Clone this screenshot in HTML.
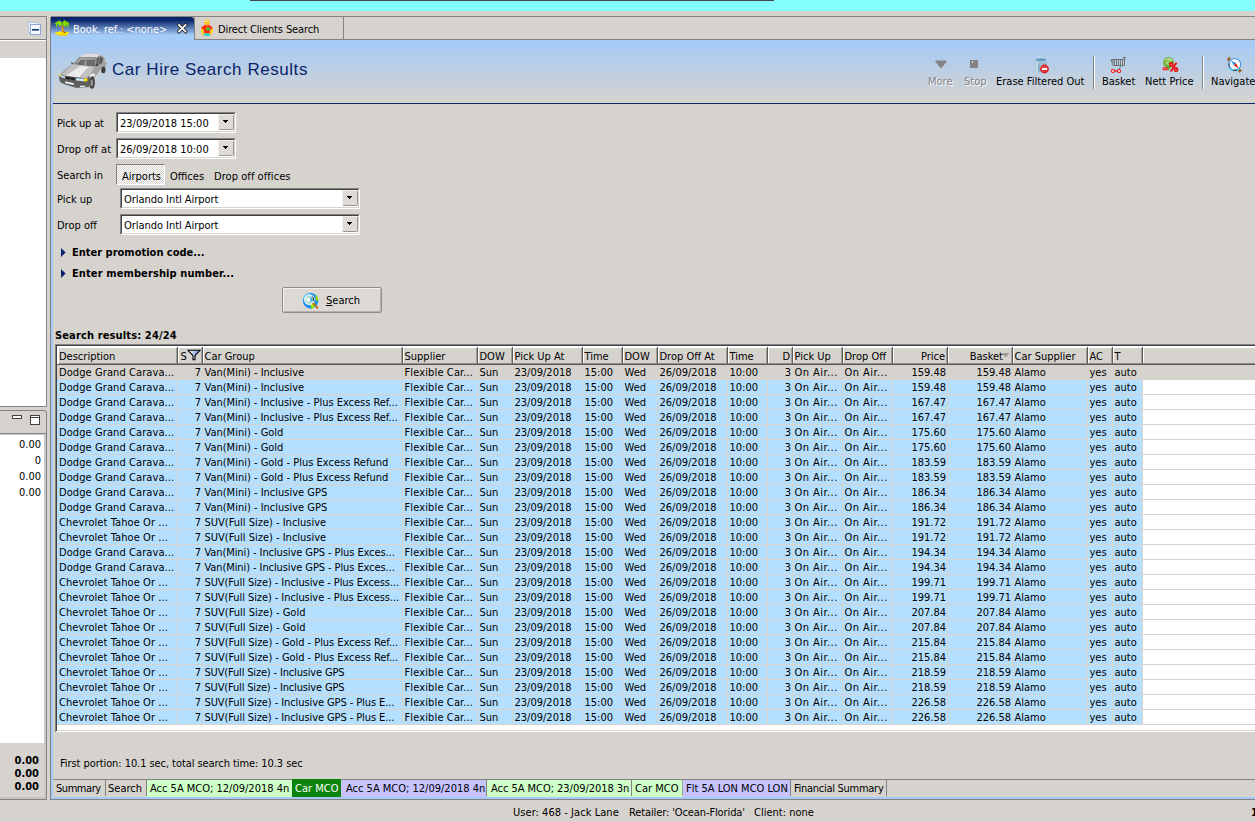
<!DOCTYPE html>
<html><head><meta charset="utf-8"><title>Car Hire Search Results</title>
<style>
html,body{margin:0;padding:0}
body{width:1255px;height:822px;overflow:hidden;position:relative;background:#d6d3ce;font-family:"DejaVu Sans Condensed", "Liberation Sans", sans-serif;font-size:11px;line-height:13px;color:#000}
div,span,svg{position:absolute;display:block}
span{white-space:pre}
span u{text-decoration:underline}
.b{font-weight:bold}
.ttl{font-family:"Liberation Sans",sans-serif;font-size:17px;line-height:20px;letter-spacing:0.55px;color:#08246b}
.sunk{box-sizing:border-box;border:1px solid;border-color:#848284 #fff #fff #848284;background:#fff}
.sunk i{position:absolute;display:block;left:0;top:0;right:0;bottom:0;border:1px solid;border-color:#424142 #d6d3ce #d6d3ce #424142}
.ddb{box-sizing:border-box;background:#dedad6;border:1px solid;border-color:#efedea #9a9792 #9a9792 #efedea;border-radius:2px}
.ddb b{position:absolute;display:block;left:4px;top:5px;width:5px;height:1px;background:#000}
.ddb b::before{content:'';position:absolute;left:1px;top:1px;width:3px;height:1px;background:#000}
.ddb b::after{content:'';position:absolute;left:2px;top:2px;width:1px;height:1px;background:#000}
.tog{box-sizing:border-box;border:1px solid;border-color:#848284 #fff #fff #848284;background:#eae9e6 repeating-conic-gradient(#ffffff 0 25%,#d6d3ce 0 50%) 0 0/2px 2px}
.btn{box-sizing:border-box;border:1px solid #8e8c88;border-radius:2px;background:#dcd9d4;box-shadow:inset 1px 1px 0 #f2f0ec,inset -1px -1px 0 #b6b3ae}
</style></head>
<body>
<div style="left:0px;top:0px;width:1255px;height:11px;background:#84ffff;"></div>
<div style="left:250px;top:0px;width:524px;height:1px;background:#4a4a4a;"></div>
<div style="left:0px;top:16px;width:47px;height:1px;background:#848284;"></div>
<div style="left:46px;top:16px;width:1px;height:391px;background:#848284;"></div>
<div style="left:0px;top:39px;width:46px;height:1px;background:#848284;"></div>
<div style="left:0px;top:40px;width:46px;height:1px;background:#ffffff;"></div>
<div style="left:0px;top:58px;width:46px;height:348px;background:#ffffff;"></div>
<div style="left:0px;top:406px;width:47px;height:1px;background:#848284;"></div>
<svg style="left:28px;top:22px" width="14" height="14" viewBox="0 0 14 14"><rect x="0.5" y="0.5" width="10" height="10" fill="#e8f0fb" stroke="#b4c8e6"/><rect x="2.5" y="2.5" width="10" height="10" fill="#f4f8fe" stroke="#8ea8d0"/><rect x="4" y="7" width="7" height="1.6" fill="#0a3c78"/></svg>
<div style="left:-4px;top:410px;width:51px;height:390px;border:1px solid #848284;border-radius:0 3px 0 0;box-sizing:border-box;background:#d6d3ce"></div>
<div style="left:0px;top:433px;width:46px;height:1px;background:#848284;"></div>
<div style="left:0px;top:434px;width:46px;height:364px;background:#c8c8c8;"></div>
<div style="left:0px;top:435px;width:44px;height:308px;background:#ffffff;"></div>
<div style="left:0px;top:743px;width:44px;height:54px;background:#d6d3ce;"></div>
<div style="left:0px;top:797px;width:46px;height:2px;background:#c4c2be;"></div>
<div style="left:12px;top:415px;width:10px;height:4px;box-sizing:border-box;border:1px solid #424142;background:#fff"></div>
<div style="left:30px;top:415px;width:10px;height:10px;box-sizing:border-box;border:1px solid #424142;background:#fff"></div>
<div style="left:30px;top:417px;width:10px;height:1px;background:#424142;"></div>
<span style="right:1214px;top:438px;">0.00</span>
<span style="right:1214px;top:454px;">0</span>
<span style="right:1214px;top:470px;">0.00</span>
<span style="right:1214px;top:486px;">0.00</span>
<span class="b" style="right:1216px;top:754px;">0.00</span>
<span class="b" style="right:1216px;top:767px;">0.00</span>
<span class="b" style="right:1216px;top:780px;">0.00</span>
<div style="left:51px;top:16px;width:1204px;height:1px;background:#848284;"></div>
<div style="left:50px;top:17px;width:1px;height:783px;background:#848284;"></div>
<div style="left:194px;top:39px;width:1061px;height:1px;background:#848284;"></div>
<div style="left:51px;top:17px;width:143px;height:23px;background:linear-gradient(#08246b 0px,#08246b 3px,#a5cbf7 18px,#a5cbf7 23px);border-radius:0 3px 0 0"></div>
<div style="left:343px;top:17px;width:1px;height:22px;background:#848284;"></div>
<div style="left:194px;top:17px;width:1px;height:22px;background:#848284;"></div>
<div style="left:51px;top:40px;width:1204px;height:63px;background:linear-gradient(#a5cbf7 0px,#a5cbf7 2px,#d6d3ce 62px,#d6d3ce 63px)"></div>
<div style="left:53px;top:103px;width:1202px;height:1px;background:#08246b;"></div>
<div style="left:51px;top:40px;width:2px;height:759px;background:#a5cbf7;"></div>
<div style="left:51px;top:797px;width:1204px;height:2px;background:#a5cbf7;"></div>
<div style="left:0px;top:799px;width:1255px;height:1px;background:#848284;"></div>
<div style="left:47px;top:799px;width:3px;height:1px;background:#d6d3ce;"></div>
<svg style="left:53px;top:19px" width="18" height="18" viewBox="0 0 18 18">
<path d="M2 13.6 L4 13 L7 12.6 L13 12.8 L16 13.6 L16 14.6 L14 15.2 L13.6 16.4 L5.6 16.4 L5 15.4 L2.6 15 Z" fill="#ffe400"/>
<path d="M5 15.4 L13.8 15.4 L13.6 16.6 L5.6 16.6 Z" fill="#f0c000"/>
<path d="M8.6 4.5 Q8.2 8 9.2 13.6 L11 13.6 Q10.2 8 10 5 Z" fill="#f8a800"/>
<path d="M9 7.2h1.2v1h-1.2zM9.3 9.6h1.2v1h-1.2zM9.5 12h1.3v1h-1.3z" fill="#b85000"/>
<path d="M10.8 12.8h2.2v0.9h-2.2z" fill="#604000"/>
<path d="M9.2 4.6 C7 1 3.5 1.6 1 5.6 C1.6 5.4 2.6 4.6 3.4 4.6 C3 5.8 2.6 7 3.6 8.6 C4 6.8 4.6 5.6 6 5 C5.6 6.2 5.8 7.4 6.6 8.6 C6.8 6.8 7.6 5.8 9.2 5.4 Z" fill="#84dc00"/>
<path d="M9.4 4.6 C11 1.2 15 1.4 17 6.2 C16.4 5.8 15.6 5.2 15 5.2 C15.6 6.6 15.6 8 14.8 9.6 C14.6 7.6 14 6.4 12.8 5.8 C13 7 12.6 8 12 9 C11.8 7.2 11 6.2 9.4 5.4 Z" fill="#84dc00"/>
<path d="M9.2 5 C8 2.4 6 1 4.6 1 C6 1.6 7 3 7.6 4.6 Z M9.4 5 C9.6 2.6 11 1 12.8 0.9 C11.6 2 11 3.4 10.8 4.8 Z" fill="#a0f000"/>
<path d="M8 4 L10.6 4 L10.2 6 L8.6 6 Z" fill="#5cb400"/>
</svg>
<span style="left:73px;top:23px;color:#fff;letter-spacing:0px">Book. ref.: &lt;none&gt;</span>
<svg style="left:177px;top:23px" width="10.5" height="10.5" viewBox="0 0 11 11"><path d="M2 2 L9 9 M9 2 L2 9" stroke="#222" stroke-width="3.6" stroke-linecap="square"/><path d="M2 2 L9 9 M9 2 L2 9" stroke="#fff" stroke-width="1.8" stroke-linecap="square"/></svg>
<svg style="left:199px;top:19px" width="18" height="18" viewBox="0 0 18 18">
<ellipse cx="8" cy="3.2" rx="2.7" ry="2.4" fill="#ffc818"/><ellipse cx="7.8" cy="2.6" rx="1.4" ry="0.9" fill="#fff4b0"/><ellipse cx="8" cy="3.6" rx="0.9" ry="0.5" fill="#ff8a00"/>
<path d="M5.6 6 L7 5.4 L8 6.4 L9 5.4 L10.4 6 L13.6 8.4 L12.2 11.4 L11 10.6 L11 14.6 L5 14.6 L5 10.6 L3.8 11.4 L2.2 8.6 Z" fill="#ff3008"/>
<path d="M7.4 5.6 L8.6 5.6 L8.4 7.2 L7.6 7.2 Z" fill="#ffb800"/>
<path d="M2.2 9.6 Q1.4 11 2.4 13 L4.4 16.6 L5.6 16 L4.6 12.4 L4.2 10.6 Z" fill="#ffd000"/>
<path d="M13.6 9.6 Q14.6 11 13.6 13 L11.6 16.6 L10.4 16 L11.4 12.4 L11.8 10.6 Z" fill="#ffd000"/>
<path d="M4.4 16.6 L5.6 16 L5 14 Z M11.6 16.6 L10.4 16 L11 14 Z" fill="#ff8000"/>
<rect x="7.4" y="8.6" width="3.4" height="2.6" fill="#20d848"/>
<rect x="5.2" y="14.4" width="5.8" height="2.4" fill="#18e0e0"/><rect x="7.8" y="14.8" width="0.8" height="1.8" fill="#20b070"/>
</svg>
<span style="left:218px;top:23px;letter-spacing:-0.119px;">Direct Clients Search</span>
<svg style="left:54px;top:48px" width="60" height="48" viewBox="0 0 60 48">
<path d="M5.1 29.2 L6.1 26 L12.3 20.4 L17.5 16.9 L19.3 15.8 L25.7 8.8 L28 7.3 L32.7 5.8 L40.9 5.8 L46.7 7 L50.2 9.9 L52 12.8 L52.5 15.8 L51.4 17.5 L51.1 24.5 L47.3 24.5 L46.7 22.2 L40.9 30.4 L40.3 35 L38.5 40.3 L36.2 40.9 L35 39.1 L22.2 39.7 L10.5 36.2 L6.1 33.9 Z" fill="#a2a2a2"/>
<path d="M25.7 8.8 L28 7.3 L32.7 5.8 L40.9 5.8 L46.7 7 L43 9.6 L26 9.6 Z" fill="#dedede"/>
<path d="M19.5 16.3 L25.7 9.3 L42 9.3 L40.9 18.7 Z" fill="#6c6c6c"/>
<path d="M21 15.2 L26 9.8 L41.5 9.8 L41.3 11.5 L27 11.8 L23 15.6 Z" fill="#a8a8a8"/>
<path d="M30.6 12 L32.6 12 L32.3 17.6 L30.2 17.4 Z" fill="#9a9a9a"/>
<path d="M6.5 26 L19.3 16.3 L40.9 18.7 L35 27.7 L32.7 30.4 L11.7 28 Z" fill="#c2c2c2"/>
<path d="M26.3 18.1 L32.7 18.7 L23.4 29.2 L12.3 27.6 Z" fill="#ececec"/>
<path d="M32.7 18.7 L34 18.8 L24.6 29.4 L23.4 29.2 Z" fill="#ffffff"/>
<path d="M12.3 20.6 L17.5 17.2 L9 26.6 L6.8 26 Z" fill="#b0b0b0"/>
<path d="M5.1 29.2 L6.3 26.4 L11.7 28 L32.7 30.4 L35 28 L35.6 33 L35 39.1 L22.2 39.7 L10.5 36.2 L6.1 33.9 Z" fill="#5e5e5e"/>
<path d="M11.8 28.6 L16 29.2 L16 31.6 L12 30.8 Z M16.6 29.4 L20.8 30 L20.6 32.4 L16.6 31.6 Z" fill="#1e1e1e"/>
<path d="M22 30.2 L30 30.7 L30 33.3 L22.2 32.6 Z" fill="#cdeeff"/>
<path d="M30.1 30.5 L33.4 30.2 L33.4 33.2 L30.1 33.5 Z" fill="#ffe000"/>
<path d="M6.4 27 L11 28.5 L11 30.2 L6.4 29 Z" fill="#bfe4ff"/><rect x="5.6" y="26" width="1.4" height="1.6" fill="#ffe000"/>
<path d="M11.1 33.3 L19.8 35.2 L19.8 37 L11.1 35.2 Z" fill="#f0f0f0"/>
<path d="M26 37.7 L31 37.8 L31 39 L26 39 Z" fill="#f4f4f4"/>
<path d="M40.9 18.7 L42 9.5 L46.7 7 L50.2 9.9 L52 12.8 L52.5 15.8 L51.4 17.5 L51.1 24.5 L47.3 24.5 L46.7 22.2 L40.9 30.4 L40.5 27 Z" fill="#a0a0a0"/>
<path d="M42.8 10.2 L46.5 8.3 L49.2 10.8 L47.6 15.6 L42.2 17.6 Z" fill="#565656"/>
<path d="M45.4 9 L46.2 8.6 L45 16.6 L44 17 Z" fill="#a0a0a0"/>
<path d="M35.6 27.6 Q38 24.2 41 26.2 L41 28.8 Q38.4 26.6 36.2 29.6 Z" fill="#efefef"/>
<ellipse cx="38.1" cy="34.6" rx="2.7" ry="6.2" fill="#3a3a3a"/><ellipse cx="37.8" cy="34.8" rx="1.3" ry="3.6" fill="#9a9a9a"/>
<ellipse cx="49.4" cy="22" rx="2" ry="3.3" fill="#3a3a3a"/>
<path d="M41.2 30 L47 21.8" stroke="#e6e6e6" stroke-width="0.9"/>
<path d="M16.8 14 L18.6 14.4 L19.4 16.2 L17.6 15.8 Z" fill="#444"/>
<path d="M41.6 16.4 L44.2 16.2 L44 18 L41.6 18 Z" fill="#3c3c3c"/>
<path d="M50.6 12.6 L52.8 12.4 L52.8 13.6 L50.8 13.8 Z" fill="#e8e8e8"/>
</svg>
<span class="ttl" style="left:112px;top:60px">Car Hire Search Results</span>
<svg style="left:935px;top:60px" width="12" height="9" viewBox="0 0 12 9"><path d="M0.5 0.5 L11.5 0.5 L11.5 2 L6 8.5 L0.5 2 Z" fill="#848284"/></svg>
<span style="left:929px;top:76px;color:#fff">More</span>
<span style="left:928px;top:75px;color:#848284">More</span>
<div style="left:970px;top:60px;width:8px;height:8px;background:#848284;"></div>
<div style="left:972px;top:61px;width:1px;height:2px;background:#e8e8e8;"></div>
<span style="left:965px;top:76px;color:#fff">Stop</span>
<span style="left:964px;top:75px;color:#848284">Stop</span>
<svg style="left:1033px;top:56px" width="18" height="19" viewBox="0 0 18 19">
<path d="M1.2 3.6 L14.8 3.6 L14 5.4 L13.4 16 Q8 17.6 2.6 16 L2 5.4 Z" fill="#9dbdd4"/>
<path d="M3 5.5 L5 5.8 L5.2 16.4 L3.2 16 Z" fill="#c6dcea"/>
<path d="M5.4 8.6 L6.4 8.6 L6.4 15.6 L5.4 15.6 Z" fill="#6c98bc"/>
<ellipse cx="8" cy="3.6" rx="6.8" ry="2.3" fill="#d4e6f2"/>
<ellipse cx="8" cy="3.7" rx="5.9" ry="1.7" fill="#6c9cc4"/>
<circle cx="11.5" cy="13" r="4.4" fill="#dc1c1c"/>
<rect x="8.8" y="12" width="5.4" height="2" fill="#fff"/><rect x="8.8" y="10.6" width="5.4" height="0.8" fill="#f08080"/><rect x="8.8" y="14.6" width="5.4" height="0.8" fill="#f06060"/></svg>
<span style="left:996px;top:75px;">Erase Filtered Out</span>
<div style="left:1093px;top:56px;width:1px;height:33px;background:#848284;"></div>
<div style="left:1094px;top:56px;width:1px;height:33px;background:#ffffff;"></div>
<svg style="left:1109px;top:55px" width="19" height="20" viewBox="0 0 19 20">
<path d="M14 2.5 L17 2.5 M15.5 2.5 L15.5 10.5 M2 4.5 L15.5 4.5 M2 4.5 L4 10.5 L15.5 10.5" fill="none" stroke="#707070" stroke-width="1"/>
<path d="M5.5 5 L5.5 10 M7.5 5 L7.5 10 M9.5 5 L9.5 10 M11.5 5 L11.5 10 M13.5 5 L13.5 10 M3.6 5 L4.6 8" stroke="#787878" stroke-width="1"/>
<path d="M12 10.5 L10.4 14" stroke="#5a8a90" stroke-width="1"/>
<path d="M5.6 16 L8.4 16" stroke="#e01010" stroke-width="1.2"/>
<circle cx="4" cy="16" r="1.5" fill="#fff" stroke="#e80c0c" stroke-width="1.1"/><circle cx="10" cy="16" r="1.5" fill="#fff" stroke="#e80c0c" stroke-width="1.1"/>
</svg>
<span style="left:1102px;top:75px;">Basket</span>
<svg style="left:1161px;top:55px" width="19" height="19" viewBox="0 0 19 19">
<ellipse cx="7.6" cy="7.6" rx="5.4" ry="5.6" fill="#6cb234"/>
<path d="M4.6 5.4 Q7.6 2.8 10.6 5 Q7.4 6.4 5.4 7.8 Q7.6 10.6 10.8 9" stroke="#c4e49c" stroke-width="1.3" fill="none"/>
<path d="M6 12.6 L8.8 12.2 L8 16 Z" fill="#58a028"/>
<path d="M14.6 7.2 L16.4 8 L10.6 17 L8.8 16.2 Z" fill="#ee1010"/>
<ellipse cx="10.2" cy="9.6" rx="2.3" ry="2.5" fill="#ee1010"/><ellipse cx="10.2" cy="9.6" rx="0.6" ry="0.9" fill="#ff9c9c"/>
<ellipse cx="15" cy="14.6" rx="2.4" ry="2.5" fill="#ee1010"/><ellipse cx="15" cy="14.6" rx="0.6" ry="0.9" fill="#ff9c9c"/>
<rect x="1.8" y="12.4" width="4.8" height="2.8" fill="#ee1010"/><rect x="2.8" y="13.4" width="2.6" height="0.8" fill="#ffb0b0"/>
</svg>
<span style="left:1145px;top:75px;">Nett Price</span>
<div style="left:1202px;top:56px;width:1px;height:33px;background:#848284;"></div>
<div style="left:1203px;top:56px;width:1px;height:33px;background:#ffffff;"></div>
<svg style="left:1225px;top:55px" width="20" height="20" viewBox="0 0 20 20">
<path d="M2 4.4 L3.4 2.6 L4.6 2 L5.8 3.4 L4.6 4.4 L4.4 6.2 L3.2 6.6 Z" fill="#96601c"/>
<path d="M13.4 14.6 L14.8 13.6 L16.2 14.8 L17.4 16 L15.6 16.6 L14.6 18 L13.4 16.6 Z" fill="#96601c"/>
<circle cx="9.8" cy="9.4" r="6.5" fill="#f4f8fc"/>
<circle cx="9.8" cy="9.4" r="5.9" fill="none" stroke="#3c8cd8" stroke-width="1.1"/>
<path d="M4.6 12.6 A6 6 0 0 0 14.6 13" fill="none" stroke="#30c8e8" stroke-width="1.3"/>
<path d="M4 8 A6 6 0 0 0 4.8 12.8" fill="none" stroke="#284878" stroke-width="1"/>
<path d="M8 15.4 L12 15.2" stroke="#403030" stroke-width="1"/>
<path d="M6 5.6 L11 8 L9 10.4 Z" fill="#1e8ee8"/><path d="M13.6 13.6 L11 8 L9 10.4 Z" fill="#f01c10"/>
<circle cx="9" cy="6" r="1.2" fill="#ffffff"/>
</svg>
<span style="left:1211px;top:75px;">Navigate</span>
<span style="left:57px;top:117px;letter-spacing:-0.160px;">Pick up at</span>
<div class="sunk" style="left:116px;top:112px;width:120px;height:21px"><i></i></div>
<span style="left:120px;top:117px;">23/09/2018 15:00</span>
<div class="ddb" style="left:218px;top:114px;width:16px;height:16px"><b></b></div>
<span style="left:57px;top:143px;letter-spacing:0.108px;">Drop off at</span>
<div class="sunk" style="left:116px;top:138px;width:120px;height:21px"><i></i></div>
<span style="left:120px;top:143px;">26/09/2018 10:00</span>
<div class="ddb" style="left:218px;top:140px;width:16px;height:16px"><b></b></div>
<span style="left:57px;top:169px;">Search in</span>
<div class="tog" style="left:116px;top:164px;width:49px;height:21px"></div>
<span style="left:122px;top:170px;">Airports</span>
<span style="left:170px;top:170px;">Offices</span>
<span style="left:214px;top:170px;letter-spacing:0.060px;">Drop off offices</span>
<span style="left:57px;top:193px;">Pick up</span>
<div class="sunk" style="left:120px;top:188px;width:240px;height:21px"><i></i></div>
<span style="left:124px;top:193px;letter-spacing:-0.047px;">Orlando Intl Airport</span>
<div class="ddb" style="left:342px;top:190px;width:16px;height:16px"><b></b></div>
<span style="left:57px;top:219px;">Drop off</span>
<div class="sunk" style="left:120px;top:214px;width:240px;height:21px"><i></i></div>
<span style="left:124px;top:219px;letter-spacing:-0.047px;">Orlando Intl Airport</span>
<div class="ddb" style="left:342px;top:216px;width:16px;height:16px"><b></b></div>
<svg style="left:61px;top:248px" width="5" height="9" viewBox="0 0 5 9"><path d="M0 0 L4.6 4.5 L0 9 Z" fill="#08246b"/></svg>
<span class="b" style="left:72px;top:246px;">Enter promotion code...</span>
<svg style="left:61px;top:269px" width="5" height="9" viewBox="0 0 5 9"><path d="M0 0 L4.6 4.5 L0 9 Z" fill="#08246b"/></svg>
<span class="b" style="left:72px;top:267px;letter-spacing:0.108px;">Enter membership number...</span>
<div class="btn" style="left:282px;top:287px;width:100px;height:26px"></div>
<svg style="left:302px;top:292px" width="18" height="18" viewBox="0 0 18 18">
<circle cx="8.6" cy="8.8" r="7.7" fill="#1e90f0"/>
<path d="M1.2 8 A7.6 7.6 0 0 1 8 1.2 L8 3 A5.8 5.8 0 0 0 3 8 Z" fill="#28d0f8"/>
<path d="M13.2 2.8 Q16.4 4.6 16.2 8.6 L14.4 8.8 Q13.4 7.6 13.8 5.8 Z" fill="#9ce000"/>
<path d="M9.2 11.4 L12.6 11 L13.6 13 L12 15.6 L9.6 16.4 L8.6 14 Z" fill="#a4f000"/>
<path d="M8.6 14 L9.6 16.6 L8.8 16.8 Z" fill="#20a060"/>
<circle cx="7.4" cy="7.6" r="4.6" fill="#a8dcc8"/>
<circle cx="6.2" cy="7.6" r="1.9" fill="#ffffff"/><path d="M8.6 5 Q11 6 10.4 9 L8.8 9.4 Q8 7 8.6 5 Z" fill="#40a8f0"/>
<circle cx="7.4" cy="7.6" r="4.7" fill="none" stroke="#f8f8f8" stroke-width="1.3"/>
<path d="M10.8 11.2 L16 16.4" stroke="#b86018" stroke-width="1.7"/>
<path d="M10.6 4.6 Q12 6.4 11.4 9" stroke="#202020" stroke-width="0.9" fill="none"/>
</svg>
<span style="left:326px;top:294px"><u>S</u>earch</span>
<span class="b" style="left:55px;top:329px;letter-spacing:0.135px;">Search results: 24/24</span>
<div style="left:55px;top:344px;width:1200px;height:1px;background:#848284;"></div>
<div style="left:55px;top:344px;width:1px;height:388px;background:#848284;"></div>
<div style="left:56px;top:345px;width:1199px;height:1px;background:#424142;"></div>
<div style="left:56px;top:345px;width:1px;height:386px;background:#424142;"></div>
<div style="left:57px;top:346px;width:1198px;height:384px;background:#ffffff;"></div>
<div style="left:56px;top:731px;width:1199px;height:1px;background:#ffffff;"></div>
<div style="left:57px;top:348px;width:1198px;height:17px;background:#d6d3ce;"></div>
<div style="left:57px;top:363px;width:1198px;height:1px;background:#908e88;"></div>
<div style="left:57px;top:364px;width:1198px;height:1px;background:#5c5a54;"></div>
<div style="left:57px;top:347px;width:2px;height:17px;background:#ffffff;"></div>
<div style="left:176px;top:348px;width:1px;height:16px;background:#a09e98;"></div>
<div style="left:177px;top:347px;width:1px;height:18px;background:#5c5a54;"></div>
<div style="left:178px;top:347px;width:1px;height:16px;background:#ffffff;"></div>
<div style="left:201px;top:348px;width:1px;height:16px;background:#a09e98;"></div>
<div style="left:202px;top:347px;width:1px;height:18px;background:#5c5a54;"></div>
<div style="left:203px;top:347px;width:1px;height:16px;background:#ffffff;"></div>
<div style="left:401px;top:348px;width:1px;height:16px;background:#a09e98;"></div>
<div style="left:402px;top:347px;width:1px;height:18px;background:#5c5a54;"></div>
<div style="left:403px;top:347px;width:1px;height:16px;background:#ffffff;"></div>
<div style="left:476px;top:348px;width:1px;height:16px;background:#a09e98;"></div>
<div style="left:477px;top:347px;width:1px;height:18px;background:#5c5a54;"></div>
<div style="left:478px;top:347px;width:1px;height:16px;background:#ffffff;"></div>
<div style="left:511px;top:348px;width:1px;height:16px;background:#a09e98;"></div>
<div style="left:512px;top:347px;width:1px;height:18px;background:#5c5a54;"></div>
<div style="left:513px;top:347px;width:1px;height:16px;background:#ffffff;"></div>
<div style="left:581px;top:348px;width:1px;height:16px;background:#a09e98;"></div>
<div style="left:582px;top:347px;width:1px;height:18px;background:#5c5a54;"></div>
<div style="left:583px;top:347px;width:1px;height:16px;background:#ffffff;"></div>
<div style="left:621px;top:348px;width:1px;height:16px;background:#a09e98;"></div>
<div style="left:622px;top:347px;width:1px;height:18px;background:#5c5a54;"></div>
<div style="left:623px;top:347px;width:1px;height:16px;background:#ffffff;"></div>
<div style="left:656px;top:348px;width:1px;height:16px;background:#a09e98;"></div>
<div style="left:657px;top:347px;width:1px;height:18px;background:#5c5a54;"></div>
<div style="left:658px;top:347px;width:1px;height:16px;background:#ffffff;"></div>
<div style="left:726px;top:348px;width:1px;height:16px;background:#a09e98;"></div>
<div style="left:727px;top:347px;width:1px;height:18px;background:#5c5a54;"></div>
<div style="left:728px;top:347px;width:1px;height:16px;background:#ffffff;"></div>
<div style="left:766px;top:348px;width:1px;height:16px;background:#a09e98;"></div>
<div style="left:767px;top:347px;width:1px;height:18px;background:#5c5a54;"></div>
<div style="left:768px;top:347px;width:1px;height:16px;background:#ffffff;"></div>
<div style="left:791px;top:348px;width:1px;height:16px;background:#a09e98;"></div>
<div style="left:792px;top:347px;width:1px;height:18px;background:#5c5a54;"></div>
<div style="left:793px;top:347px;width:1px;height:16px;background:#ffffff;"></div>
<div style="left:841px;top:348px;width:1px;height:16px;background:#a09e98;"></div>
<div style="left:842px;top:347px;width:1px;height:18px;background:#5c5a54;"></div>
<div style="left:843px;top:347px;width:1px;height:16px;background:#ffffff;"></div>
<div style="left:891px;top:348px;width:1px;height:16px;background:#a09e98;"></div>
<div style="left:892px;top:347px;width:1px;height:18px;background:#5c5a54;"></div>
<div style="left:893px;top:347px;width:1px;height:16px;background:#ffffff;"></div>
<div style="left:946px;top:348px;width:1px;height:16px;background:#a09e98;"></div>
<div style="left:947px;top:347px;width:1px;height:18px;background:#5c5a54;"></div>
<div style="left:948px;top:347px;width:1px;height:16px;background:#ffffff;"></div>
<div style="left:1011px;top:348px;width:1px;height:16px;background:#a09e98;"></div>
<div style="left:1012px;top:347px;width:1px;height:18px;background:#5c5a54;"></div>
<div style="left:1013px;top:347px;width:1px;height:16px;background:#ffffff;"></div>
<div style="left:1086px;top:348px;width:1px;height:16px;background:#a09e98;"></div>
<div style="left:1087px;top:347px;width:1px;height:18px;background:#5c5a54;"></div>
<div style="left:1088px;top:347px;width:1px;height:16px;background:#ffffff;"></div>
<div style="left:1111px;top:348px;width:1px;height:16px;background:#a09e98;"></div>
<div style="left:1112px;top:347px;width:1px;height:18px;background:#5c5a54;"></div>
<div style="left:1113px;top:347px;width:1px;height:16px;background:#ffffff;"></div>
<div style="left:1141px;top:348px;width:1px;height:16px;background:#a09e98;"></div>
<div style="left:1142px;top:347px;width:1px;height:18px;background:#5c5a54;"></div>
<div style="left:1143px;top:347px;width:1px;height:16px;background:#ffffff;"></div>
<div style="left:57px;top:346px;width:1198px;height:2px;background:#ffffff;"></div>
<div style="left:177px;top:347px;width:1px;height:1px;background:#5c5a54;"></div>
<div style="left:202px;top:347px;width:1px;height:1px;background:#5c5a54;"></div>
<div style="left:402px;top:347px;width:1px;height:1px;background:#5c5a54;"></div>
<div style="left:477px;top:347px;width:1px;height:1px;background:#5c5a54;"></div>
<div style="left:512px;top:347px;width:1px;height:1px;background:#5c5a54;"></div>
<div style="left:582px;top:347px;width:1px;height:1px;background:#5c5a54;"></div>
<div style="left:622px;top:347px;width:1px;height:1px;background:#5c5a54;"></div>
<div style="left:657px;top:347px;width:1px;height:1px;background:#5c5a54;"></div>
<div style="left:727px;top:347px;width:1px;height:1px;background:#5c5a54;"></div>
<div style="left:767px;top:347px;width:1px;height:1px;background:#5c5a54;"></div>
<div style="left:792px;top:347px;width:1px;height:1px;background:#5c5a54;"></div>
<div style="left:842px;top:347px;width:1px;height:1px;background:#5c5a54;"></div>
<div style="left:892px;top:347px;width:1px;height:1px;background:#5c5a54;"></div>
<div style="left:947px;top:347px;width:1px;height:1px;background:#5c5a54;"></div>
<div style="left:1012px;top:347px;width:1px;height:1px;background:#5c5a54;"></div>
<div style="left:1087px;top:347px;width:1px;height:1px;background:#5c5a54;"></div>
<div style="left:1112px;top:347px;width:1px;height:1px;background:#5c5a54;"></div>
<div style="left:1142px;top:347px;width:1px;height:1px;background:#5c5a54;"></div>
<span style="left:59px;top:350px;">Description</span>
<span style="left:180.5px;top:350px;">S</span>
<span style="left:204.5px;top:350px;">Car Group</span>
<span style="left:404.5px;top:350px;">Supplier</span>
<span style="left:479.5px;top:350px;">DOW</span>
<span style="left:514.5px;top:350px;">Pick Up At</span>
<span style="left:584.5px;top:350px;">Time</span>
<span style="left:624.5px;top:350px;">DOW</span>
<span style="left:659.5px;top:350px;">Drop Off At</span>
<span style="left:729.5px;top:350px;">Time</span>
<span style="right:465px;top:350px;">D</span>
<span style="left:794.5px;top:350px;">Pick Up</span>
<span style="left:844.5px;top:350px;">Drop Off</span>
<span style="right:310px;top:350px;">Price</span>
<span style="right:252px;top:350px;">Basket</span>
<span style="left:1014.5px;top:350px;">Car Supplier</span>
<span style="left:1089.5px;top:350px;">AC</span>
<span style="left:1114.5px;top:350px;">T</span>
<svg style="left:186.5px;top:349px" width="14" height="12" viewBox="0 0 15 12"><defs><linearGradient id="fg" x1="0" y1="0" x2="1" y2="0"><stop offset="0" stop-color="#fff"/><stop offset="1" stop-color="#5a8ad8"/></linearGradient></defs><path d="M1 1 L14 1 L8.6 6.6 L8.6 11 L6.4 11 L6.4 6.6 Z" fill="url(#fg)" stroke="#000" stroke-width="1.1" stroke-linejoin="miter"/></svg>
<svg style="left:1002px;top:353px" width="8" height="5" viewBox="0 0 8 5"><path d="M0 0 L7.4 0 L3.7 4.4 Z" fill="#9a9890"/></svg>
<div style="left:57px;top:365px;width:1198px;height:14px;background:#d6d3ce;"></div>
<div style="left:57px;top:379px;width:1198px;height:1px;background:#d6d3ce;"></div>
<span style="left:59px;top:366px;letter-spacing:0.090px;">Dodge Grand Carava...</span>
<span style="right:1054px;top:366px;">7</span>
<span style="left:204.5px;top:366px;">Van(Mini) - Inclusive</span>
<span style="left:404.5px;top:366px;letter-spacing:0.129px;">Flexible Car...</span>
<span style="left:479.5px;top:366px;">Sun</span>
<span style="left:514.5px;top:366px;">23/09/2018</span>
<span style="left:584.5px;top:366px;">15:00</span>
<span style="left:624.5px;top:366px;">Wed</span>
<span style="left:659.5px;top:366px;">26/09/2018</span>
<span style="left:729.5px;top:366px;">10:00</span>
<span style="right:464px;top:366px;">3</span>
<span style="left:794.5px;top:366px;letter-spacing:0.450px;">On Air...</span>
<span style="left:844.5px;top:366px;letter-spacing:0.450px;">On Air...</span>
<span style="right:309px;top:366px;">159.48</span>
<span style="right:244px;top:366px;">159.48</span>
<span style="left:1014.5px;top:366px;">Alamo</span>
<span style="left:1089.5px;top:366px;">yes</span>
<span style="left:1114.5px;top:366px;">auto</span>
<div style="left:57px;top:380px;width:1085px;height:14px;background:#b5dfff;"></div>
<div style="left:57px;top:394px;width:1198px;height:1px;background:#d6d3ce;"></div>
<span style="left:59px;top:381px;letter-spacing:0.090px;">Dodge Grand Carava...</span>
<span style="right:1054px;top:381px;">7</span>
<span style="left:204.5px;top:381px;">Van(Mini) - Inclusive</span>
<span style="left:404.5px;top:381px;letter-spacing:0.129px;">Flexible Car...</span>
<span style="left:479.5px;top:381px;">Sun</span>
<span style="left:514.5px;top:381px;">23/09/2018</span>
<span style="left:584.5px;top:381px;">15:00</span>
<span style="left:624.5px;top:381px;">Wed</span>
<span style="left:659.5px;top:381px;">26/09/2018</span>
<span style="left:729.5px;top:381px;">10:00</span>
<span style="right:464px;top:381px;">3</span>
<span style="left:794.5px;top:381px;letter-spacing:0.450px;">On Air...</span>
<span style="left:844.5px;top:381px;letter-spacing:0.450px;">On Air...</span>
<span style="right:309px;top:381px;">159.48</span>
<span style="right:244px;top:381px;">159.48</span>
<span style="left:1014.5px;top:381px;">Alamo</span>
<span style="left:1089.5px;top:381px;">yes</span>
<span style="left:1114.5px;top:381px;">auto</span>
<div style="left:57px;top:395px;width:1085px;height:14px;background:#b5dfff;"></div>
<div style="left:57px;top:409px;width:1198px;height:1px;background:#d6d3ce;"></div>
<span style="left:59px;top:396px;letter-spacing:0.090px;">Dodge Grand Carava...</span>
<span style="right:1054px;top:396px;">7</span>
<span style="left:204.5px;top:396px;letter-spacing:-0.022px;">Van(Mini) - Inclusive - Plus Excess Ref...</span>
<span style="left:404.5px;top:396px;letter-spacing:0.129px;">Flexible Car...</span>
<span style="left:479.5px;top:396px;">Sun</span>
<span style="left:514.5px;top:396px;">23/09/2018</span>
<span style="left:584.5px;top:396px;">15:00</span>
<span style="left:624.5px;top:396px;">Wed</span>
<span style="left:659.5px;top:396px;">26/09/2018</span>
<span style="left:729.5px;top:396px;">10:00</span>
<span style="right:464px;top:396px;">3</span>
<span style="left:794.5px;top:396px;letter-spacing:0.450px;">On Air...</span>
<span style="left:844.5px;top:396px;letter-spacing:0.450px;">On Air...</span>
<span style="right:309px;top:396px;">167.47</span>
<span style="right:244px;top:396px;">167.47</span>
<span style="left:1014.5px;top:396px;">Alamo</span>
<span style="left:1089.5px;top:396px;">yes</span>
<span style="left:1114.5px;top:396px;">auto</span>
<div style="left:57px;top:410px;width:1085px;height:14px;background:#b5dfff;"></div>
<div style="left:57px;top:424px;width:1198px;height:1px;background:#d6d3ce;"></div>
<span style="left:59px;top:411px;letter-spacing:0.090px;">Dodge Grand Carava...</span>
<span style="right:1054px;top:411px;">7</span>
<span style="left:204.5px;top:411px;letter-spacing:-0.022px;">Van(Mini) - Inclusive - Plus Excess Ref...</span>
<span style="left:404.5px;top:411px;letter-spacing:0.129px;">Flexible Car...</span>
<span style="left:479.5px;top:411px;">Sun</span>
<span style="left:514.5px;top:411px;">23/09/2018</span>
<span style="left:584.5px;top:411px;">15:00</span>
<span style="left:624.5px;top:411px;">Wed</span>
<span style="left:659.5px;top:411px;">26/09/2018</span>
<span style="left:729.5px;top:411px;">10:00</span>
<span style="right:464px;top:411px;">3</span>
<span style="left:794.5px;top:411px;letter-spacing:0.450px;">On Air...</span>
<span style="left:844.5px;top:411px;letter-spacing:0.450px;">On Air...</span>
<span style="right:309px;top:411px;">167.47</span>
<span style="right:244px;top:411px;">167.47</span>
<span style="left:1014.5px;top:411px;">Alamo</span>
<span style="left:1089.5px;top:411px;">yes</span>
<span style="left:1114.5px;top:411px;">auto</span>
<div style="left:57px;top:425px;width:1085px;height:14px;background:#b5dfff;"></div>
<div style="left:57px;top:439px;width:1198px;height:1px;background:#d6d3ce;"></div>
<span style="left:59px;top:426px;letter-spacing:0.090px;">Dodge Grand Carava...</span>
<span style="right:1054px;top:426px;">7</span>
<span style="left:204.5px;top:426px;">Van(Mini) - Gold</span>
<span style="left:404.5px;top:426px;letter-spacing:0.129px;">Flexible Car...</span>
<span style="left:479.5px;top:426px;">Sun</span>
<span style="left:514.5px;top:426px;">23/09/2018</span>
<span style="left:584.5px;top:426px;">15:00</span>
<span style="left:624.5px;top:426px;">Wed</span>
<span style="left:659.5px;top:426px;">26/09/2018</span>
<span style="left:729.5px;top:426px;">10:00</span>
<span style="right:464px;top:426px;">3</span>
<span style="left:794.5px;top:426px;letter-spacing:0.450px;">On Air...</span>
<span style="left:844.5px;top:426px;letter-spacing:0.450px;">On Air...</span>
<span style="right:309px;top:426px;">175.60</span>
<span style="right:244px;top:426px;">175.60</span>
<span style="left:1014.5px;top:426px;">Alamo</span>
<span style="left:1089.5px;top:426px;">yes</span>
<span style="left:1114.5px;top:426px;">auto</span>
<div style="left:57px;top:440px;width:1085px;height:14px;background:#b5dfff;"></div>
<div style="left:57px;top:454px;width:1198px;height:1px;background:#d6d3ce;"></div>
<span style="left:59px;top:441px;letter-spacing:0.090px;">Dodge Grand Carava...</span>
<span style="right:1054px;top:441px;">7</span>
<span style="left:204.5px;top:441px;">Van(Mini) - Gold</span>
<span style="left:404.5px;top:441px;letter-spacing:0.129px;">Flexible Car...</span>
<span style="left:479.5px;top:441px;">Sun</span>
<span style="left:514.5px;top:441px;">23/09/2018</span>
<span style="left:584.5px;top:441px;">15:00</span>
<span style="left:624.5px;top:441px;">Wed</span>
<span style="left:659.5px;top:441px;">26/09/2018</span>
<span style="left:729.5px;top:441px;">10:00</span>
<span style="right:464px;top:441px;">3</span>
<span style="left:794.5px;top:441px;letter-spacing:0.450px;">On Air...</span>
<span style="left:844.5px;top:441px;letter-spacing:0.450px;">On Air...</span>
<span style="right:309px;top:441px;">175.60</span>
<span style="right:244px;top:441px;">175.60</span>
<span style="left:1014.5px;top:441px;">Alamo</span>
<span style="left:1089.5px;top:441px;">yes</span>
<span style="left:1114.5px;top:441px;">auto</span>
<div style="left:57px;top:455px;width:1085px;height:14px;background:#b5dfff;"></div>
<div style="left:57px;top:469px;width:1198px;height:1px;background:#d6d3ce;"></div>
<span style="left:59px;top:456px;letter-spacing:0.090px;">Dodge Grand Carava...</span>
<span style="right:1054px;top:456px;">7</span>
<span style="left:204.5px;top:456px;">Van(Mini) - Gold - Plus Excess Refund</span>
<span style="left:404.5px;top:456px;letter-spacing:0.129px;">Flexible Car...</span>
<span style="left:479.5px;top:456px;">Sun</span>
<span style="left:514.5px;top:456px;">23/09/2018</span>
<span style="left:584.5px;top:456px;">15:00</span>
<span style="left:624.5px;top:456px;">Wed</span>
<span style="left:659.5px;top:456px;">26/09/2018</span>
<span style="left:729.5px;top:456px;">10:00</span>
<span style="right:464px;top:456px;">3</span>
<span style="left:794.5px;top:456px;letter-spacing:0.450px;">On Air...</span>
<span style="left:844.5px;top:456px;letter-spacing:0.450px;">On Air...</span>
<span style="right:309px;top:456px;">183.59</span>
<span style="right:244px;top:456px;">183.59</span>
<span style="left:1014.5px;top:456px;">Alamo</span>
<span style="left:1089.5px;top:456px;">yes</span>
<span style="left:1114.5px;top:456px;">auto</span>
<div style="left:57px;top:470px;width:1085px;height:14px;background:#b5dfff;"></div>
<div style="left:57px;top:484px;width:1198px;height:1px;background:#d6d3ce;"></div>
<span style="left:59px;top:471px;letter-spacing:0.090px;">Dodge Grand Carava...</span>
<span style="right:1054px;top:471px;">7</span>
<span style="left:204.5px;top:471px;">Van(Mini) - Gold - Plus Excess Refund</span>
<span style="left:404.5px;top:471px;letter-spacing:0.129px;">Flexible Car...</span>
<span style="left:479.5px;top:471px;">Sun</span>
<span style="left:514.5px;top:471px;">23/09/2018</span>
<span style="left:584.5px;top:471px;">15:00</span>
<span style="left:624.5px;top:471px;">Wed</span>
<span style="left:659.5px;top:471px;">26/09/2018</span>
<span style="left:729.5px;top:471px;">10:00</span>
<span style="right:464px;top:471px;">3</span>
<span style="left:794.5px;top:471px;letter-spacing:0.450px;">On Air...</span>
<span style="left:844.5px;top:471px;letter-spacing:0.450px;">On Air...</span>
<span style="right:309px;top:471px;">183.59</span>
<span style="right:244px;top:471px;">183.59</span>
<span style="left:1014.5px;top:471px;">Alamo</span>
<span style="left:1089.5px;top:471px;">yes</span>
<span style="left:1114.5px;top:471px;">auto</span>
<div style="left:57px;top:485px;width:1085px;height:14px;background:#b5dfff;"></div>
<div style="left:57px;top:499px;width:1198px;height:1px;background:#d6d3ce;"></div>
<span style="left:59px;top:486px;letter-spacing:0.090px;">Dodge Grand Carava...</span>
<span style="right:1054px;top:486px;">7</span>
<span style="left:204.5px;top:486px;">Van(Mini) - Inclusive GPS</span>
<span style="left:404.5px;top:486px;letter-spacing:0.129px;">Flexible Car...</span>
<span style="left:479.5px;top:486px;">Sun</span>
<span style="left:514.5px;top:486px;">23/09/2018</span>
<span style="left:584.5px;top:486px;">15:00</span>
<span style="left:624.5px;top:486px;">Wed</span>
<span style="left:659.5px;top:486px;">26/09/2018</span>
<span style="left:729.5px;top:486px;">10:00</span>
<span style="right:464px;top:486px;">3</span>
<span style="left:794.5px;top:486px;letter-spacing:0.450px;">On Air...</span>
<span style="left:844.5px;top:486px;letter-spacing:0.450px;">On Air...</span>
<span style="right:309px;top:486px;">186.34</span>
<span style="right:244px;top:486px;">186.34</span>
<span style="left:1014.5px;top:486px;">Alamo</span>
<span style="left:1089.5px;top:486px;">yes</span>
<span style="left:1114.5px;top:486px;">auto</span>
<div style="left:57px;top:500px;width:1085px;height:14px;background:#b5dfff;"></div>
<div style="left:57px;top:514px;width:1198px;height:1px;background:#d6d3ce;"></div>
<span style="left:59px;top:501px;letter-spacing:0.090px;">Dodge Grand Carava...</span>
<span style="right:1054px;top:501px;">7</span>
<span style="left:204.5px;top:501px;">Van(Mini) - Inclusive GPS</span>
<span style="left:404.5px;top:501px;letter-spacing:0.129px;">Flexible Car...</span>
<span style="left:479.5px;top:501px;">Sun</span>
<span style="left:514.5px;top:501px;">23/09/2018</span>
<span style="left:584.5px;top:501px;">15:00</span>
<span style="left:624.5px;top:501px;">Wed</span>
<span style="left:659.5px;top:501px;">26/09/2018</span>
<span style="left:729.5px;top:501px;">10:00</span>
<span style="right:464px;top:501px;">3</span>
<span style="left:794.5px;top:501px;letter-spacing:0.450px;">On Air...</span>
<span style="left:844.5px;top:501px;letter-spacing:0.450px;">On Air...</span>
<span style="right:309px;top:501px;">186.34</span>
<span style="right:244px;top:501px;">186.34</span>
<span style="left:1014.5px;top:501px;">Alamo</span>
<span style="left:1089.5px;top:501px;">yes</span>
<span style="left:1114.5px;top:501px;">auto</span>
<div style="left:57px;top:515px;width:1085px;height:14px;background:#b5dfff;"></div>
<div style="left:57px;top:529px;width:1198px;height:1px;background:#d6d3ce;"></div>
<span style="left:59px;top:516px;letter-spacing:0.085px;">Chevrolet Tahoe Or ...</span>
<span style="right:1054px;top:516px;">7</span>
<span style="left:204.5px;top:516px;">SUV(Full Size) - Inclusive</span>
<span style="left:404.5px;top:516px;letter-spacing:0.129px;">Flexible Car...</span>
<span style="left:479.5px;top:516px;">Sun</span>
<span style="left:514.5px;top:516px;">23/09/2018</span>
<span style="left:584.5px;top:516px;">15:00</span>
<span style="left:624.5px;top:516px;">Wed</span>
<span style="left:659.5px;top:516px;">26/09/2018</span>
<span style="left:729.5px;top:516px;">10:00</span>
<span style="right:464px;top:516px;">3</span>
<span style="left:794.5px;top:516px;letter-spacing:0.450px;">On Air...</span>
<span style="left:844.5px;top:516px;letter-spacing:0.450px;">On Air...</span>
<span style="right:309px;top:516px;">191.72</span>
<span style="right:244px;top:516px;">191.72</span>
<span style="left:1014.5px;top:516px;">Alamo</span>
<span style="left:1089.5px;top:516px;">yes</span>
<span style="left:1114.5px;top:516px;">auto</span>
<div style="left:57px;top:530px;width:1085px;height:14px;background:#b5dfff;"></div>
<div style="left:57px;top:544px;width:1198px;height:1px;background:#d6d3ce;"></div>
<span style="left:59px;top:531px;letter-spacing:0.085px;">Chevrolet Tahoe Or ...</span>
<span style="right:1054px;top:531px;">7</span>
<span style="left:204.5px;top:531px;">SUV(Full Size) - Inclusive</span>
<span style="left:404.5px;top:531px;letter-spacing:0.129px;">Flexible Car...</span>
<span style="left:479.5px;top:531px;">Sun</span>
<span style="left:514.5px;top:531px;">23/09/2018</span>
<span style="left:584.5px;top:531px;">15:00</span>
<span style="left:624.5px;top:531px;">Wed</span>
<span style="left:659.5px;top:531px;">26/09/2018</span>
<span style="left:729.5px;top:531px;">10:00</span>
<span style="right:464px;top:531px;">3</span>
<span style="left:794.5px;top:531px;letter-spacing:0.450px;">On Air...</span>
<span style="left:844.5px;top:531px;letter-spacing:0.450px;">On Air...</span>
<span style="right:309px;top:531px;">191.72</span>
<span style="right:244px;top:531px;">191.72</span>
<span style="left:1014.5px;top:531px;">Alamo</span>
<span style="left:1089.5px;top:531px;">yes</span>
<span style="left:1114.5px;top:531px;">auto</span>
<div style="left:57px;top:545px;width:1085px;height:14px;background:#b5dfff;"></div>
<div style="left:57px;top:559px;width:1198px;height:1px;background:#d6d3ce;"></div>
<span style="left:59px;top:546px;letter-spacing:0.090px;">Dodge Grand Carava...</span>
<span style="right:1054px;top:546px;">7</span>
<span style="left:204.5px;top:546px;letter-spacing:-0.090px;">Van(Mini) - Inclusive GPS - Plus Exces...</span>
<span style="left:404.5px;top:546px;letter-spacing:0.129px;">Flexible Car...</span>
<span style="left:479.5px;top:546px;">Sun</span>
<span style="left:514.5px;top:546px;">23/09/2018</span>
<span style="left:584.5px;top:546px;">15:00</span>
<span style="left:624.5px;top:546px;">Wed</span>
<span style="left:659.5px;top:546px;">26/09/2018</span>
<span style="left:729.5px;top:546px;">10:00</span>
<span style="right:464px;top:546px;">3</span>
<span style="left:794.5px;top:546px;letter-spacing:0.450px;">On Air...</span>
<span style="left:844.5px;top:546px;letter-spacing:0.450px;">On Air...</span>
<span style="right:309px;top:546px;">194.34</span>
<span style="right:244px;top:546px;">194.34</span>
<span style="left:1014.5px;top:546px;">Alamo</span>
<span style="left:1089.5px;top:546px;">yes</span>
<span style="left:1114.5px;top:546px;">auto</span>
<div style="left:57px;top:560px;width:1085px;height:14px;background:#b5dfff;"></div>
<div style="left:57px;top:574px;width:1198px;height:1px;background:#d6d3ce;"></div>
<span style="left:59px;top:561px;letter-spacing:0.090px;">Dodge Grand Carava...</span>
<span style="right:1054px;top:561px;">7</span>
<span style="left:204.5px;top:561px;letter-spacing:-0.090px;">Van(Mini) - Inclusive GPS - Plus Exces...</span>
<span style="left:404.5px;top:561px;letter-spacing:0.129px;">Flexible Car...</span>
<span style="left:479.5px;top:561px;">Sun</span>
<span style="left:514.5px;top:561px;">23/09/2018</span>
<span style="left:584.5px;top:561px;">15:00</span>
<span style="left:624.5px;top:561px;">Wed</span>
<span style="left:659.5px;top:561px;">26/09/2018</span>
<span style="left:729.5px;top:561px;">10:00</span>
<span style="right:464px;top:561px;">3</span>
<span style="left:794.5px;top:561px;letter-spacing:0.450px;">On Air...</span>
<span style="left:844.5px;top:561px;letter-spacing:0.450px;">On Air...</span>
<span style="right:309px;top:561px;">194.34</span>
<span style="right:244px;top:561px;">194.34</span>
<span style="left:1014.5px;top:561px;">Alamo</span>
<span style="left:1089.5px;top:561px;">yes</span>
<span style="left:1114.5px;top:561px;">auto</span>
<div style="left:57px;top:575px;width:1085px;height:14px;background:#b5dfff;"></div>
<div style="left:57px;top:589px;width:1198px;height:1px;background:#d6d3ce;"></div>
<span style="left:59px;top:576px;letter-spacing:0.085px;">Chevrolet Tahoe Or ...</span>
<span style="right:1054px;top:576px;">7</span>
<span style="left:204.5px;top:576px;letter-spacing:-0.079px;">SUV(Full Size) - Inclusive - Plus Excess...</span>
<span style="left:404.5px;top:576px;letter-spacing:0.129px;">Flexible Car...</span>
<span style="left:479.5px;top:576px;">Sun</span>
<span style="left:514.5px;top:576px;">23/09/2018</span>
<span style="left:584.5px;top:576px;">15:00</span>
<span style="left:624.5px;top:576px;">Wed</span>
<span style="left:659.5px;top:576px;">26/09/2018</span>
<span style="left:729.5px;top:576px;">10:00</span>
<span style="right:464px;top:576px;">3</span>
<span style="left:794.5px;top:576px;letter-spacing:0.450px;">On Air...</span>
<span style="left:844.5px;top:576px;letter-spacing:0.450px;">On Air...</span>
<span style="right:309px;top:576px;">199.71</span>
<span style="right:244px;top:576px;">199.71</span>
<span style="left:1014.5px;top:576px;">Alamo</span>
<span style="left:1089.5px;top:576px;">yes</span>
<span style="left:1114.5px;top:576px;">auto</span>
<div style="left:57px;top:590px;width:1085px;height:14px;background:#b5dfff;"></div>
<div style="left:57px;top:604px;width:1198px;height:1px;background:#d6d3ce;"></div>
<span style="left:59px;top:591px;letter-spacing:0.085px;">Chevrolet Tahoe Or ...</span>
<span style="right:1054px;top:591px;">7</span>
<span style="left:204.5px;top:591px;letter-spacing:-0.079px;">SUV(Full Size) - Inclusive - Plus Excess...</span>
<span style="left:404.5px;top:591px;letter-spacing:0.129px;">Flexible Car...</span>
<span style="left:479.5px;top:591px;">Sun</span>
<span style="left:514.5px;top:591px;">23/09/2018</span>
<span style="left:584.5px;top:591px;">15:00</span>
<span style="left:624.5px;top:591px;">Wed</span>
<span style="left:659.5px;top:591px;">26/09/2018</span>
<span style="left:729.5px;top:591px;">10:00</span>
<span style="right:464px;top:591px;">3</span>
<span style="left:794.5px;top:591px;letter-spacing:0.450px;">On Air...</span>
<span style="left:844.5px;top:591px;letter-spacing:0.450px;">On Air...</span>
<span style="right:309px;top:591px;">199.71</span>
<span style="right:244px;top:591px;">199.71</span>
<span style="left:1014.5px;top:591px;">Alamo</span>
<span style="left:1089.5px;top:591px;">yes</span>
<span style="left:1114.5px;top:591px;">auto</span>
<div style="left:57px;top:605px;width:1085px;height:14px;background:#b5dfff;"></div>
<div style="left:57px;top:619px;width:1198px;height:1px;background:#d6d3ce;"></div>
<span style="left:59px;top:606px;letter-spacing:0.085px;">Chevrolet Tahoe Or ...</span>
<span style="right:1054px;top:606px;">7</span>
<span style="left:204.5px;top:606px;">SUV(Full Size) - Gold</span>
<span style="left:404.5px;top:606px;letter-spacing:0.129px;">Flexible Car...</span>
<span style="left:479.5px;top:606px;">Sun</span>
<span style="left:514.5px;top:606px;">23/09/2018</span>
<span style="left:584.5px;top:606px;">15:00</span>
<span style="left:624.5px;top:606px;">Wed</span>
<span style="left:659.5px;top:606px;">26/09/2018</span>
<span style="left:729.5px;top:606px;">10:00</span>
<span style="right:464px;top:606px;">3</span>
<span style="left:794.5px;top:606px;letter-spacing:0.450px;">On Air...</span>
<span style="left:844.5px;top:606px;letter-spacing:0.450px;">On Air...</span>
<span style="right:309px;top:606px;">207.84</span>
<span style="right:244px;top:606px;">207.84</span>
<span style="left:1014.5px;top:606px;">Alamo</span>
<span style="left:1089.5px;top:606px;">yes</span>
<span style="left:1114.5px;top:606px;">auto</span>
<div style="left:57px;top:620px;width:1085px;height:14px;background:#b5dfff;"></div>
<div style="left:57px;top:634px;width:1198px;height:1px;background:#d6d3ce;"></div>
<span style="left:59px;top:621px;letter-spacing:0.085px;">Chevrolet Tahoe Or ...</span>
<span style="right:1054px;top:621px;">7</span>
<span style="left:204.5px;top:621px;">SUV(Full Size) - Gold</span>
<span style="left:404.5px;top:621px;letter-spacing:0.129px;">Flexible Car...</span>
<span style="left:479.5px;top:621px;">Sun</span>
<span style="left:514.5px;top:621px;">23/09/2018</span>
<span style="left:584.5px;top:621px;">15:00</span>
<span style="left:624.5px;top:621px;">Wed</span>
<span style="left:659.5px;top:621px;">26/09/2018</span>
<span style="left:729.5px;top:621px;">10:00</span>
<span style="right:464px;top:621px;">3</span>
<span style="left:794.5px;top:621px;letter-spacing:0.450px;">On Air...</span>
<span style="left:844.5px;top:621px;letter-spacing:0.450px;">On Air...</span>
<span style="right:309px;top:621px;">207.84</span>
<span style="right:244px;top:621px;">207.84</span>
<span style="left:1014.5px;top:621px;">Alamo</span>
<span style="left:1089.5px;top:621px;">yes</span>
<span style="left:1114.5px;top:621px;">auto</span>
<div style="left:57px;top:635px;width:1085px;height:14px;background:#b5dfff;"></div>
<div style="left:57px;top:649px;width:1198px;height:1px;background:#d6d3ce;"></div>
<span style="left:59px;top:636px;letter-spacing:0.085px;">Chevrolet Tahoe Or ...</span>
<span style="right:1054px;top:636px;">7</span>
<span style="left:204.5px;top:636px;letter-spacing:-0.045px;">SUV(Full Size) - Gold - Plus Excess Ref...</span>
<span style="left:404.5px;top:636px;letter-spacing:0.129px;">Flexible Car...</span>
<span style="left:479.5px;top:636px;">Sun</span>
<span style="left:514.5px;top:636px;">23/09/2018</span>
<span style="left:584.5px;top:636px;">15:00</span>
<span style="left:624.5px;top:636px;">Wed</span>
<span style="left:659.5px;top:636px;">26/09/2018</span>
<span style="left:729.5px;top:636px;">10:00</span>
<span style="right:464px;top:636px;">3</span>
<span style="left:794.5px;top:636px;letter-spacing:0.450px;">On Air...</span>
<span style="left:844.5px;top:636px;letter-spacing:0.450px;">On Air...</span>
<span style="right:309px;top:636px;">215.84</span>
<span style="right:244px;top:636px;">215.84</span>
<span style="left:1014.5px;top:636px;">Alamo</span>
<span style="left:1089.5px;top:636px;">yes</span>
<span style="left:1114.5px;top:636px;">auto</span>
<div style="left:57px;top:650px;width:1085px;height:14px;background:#b5dfff;"></div>
<div style="left:57px;top:664px;width:1198px;height:1px;background:#d6d3ce;"></div>
<span style="left:59px;top:651px;letter-spacing:0.085px;">Chevrolet Tahoe Or ...</span>
<span style="right:1054px;top:651px;">7</span>
<span style="left:204.5px;top:651px;letter-spacing:-0.045px;">SUV(Full Size) - Gold - Plus Excess Ref...</span>
<span style="left:404.5px;top:651px;letter-spacing:0.129px;">Flexible Car...</span>
<span style="left:479.5px;top:651px;">Sun</span>
<span style="left:514.5px;top:651px;">23/09/2018</span>
<span style="left:584.5px;top:651px;">15:00</span>
<span style="left:624.5px;top:651px;">Wed</span>
<span style="left:659.5px;top:651px;">26/09/2018</span>
<span style="left:729.5px;top:651px;">10:00</span>
<span style="right:464px;top:651px;">3</span>
<span style="left:794.5px;top:651px;letter-spacing:0.450px;">On Air...</span>
<span style="left:844.5px;top:651px;letter-spacing:0.450px;">On Air...</span>
<span style="right:309px;top:651px;">215.84</span>
<span style="right:244px;top:651px;">215.84</span>
<span style="left:1014.5px;top:651px;">Alamo</span>
<span style="left:1089.5px;top:651px;">yes</span>
<span style="left:1114.5px;top:651px;">auto</span>
<div style="left:57px;top:665px;width:1085px;height:14px;background:#b5dfff;"></div>
<div style="left:57px;top:679px;width:1198px;height:1px;background:#d6d3ce;"></div>
<span style="left:59px;top:666px;letter-spacing:0.085px;">Chevrolet Tahoe Or ...</span>
<span style="right:1054px;top:666px;">7</span>
<span style="left:204.5px;top:666px;letter-spacing:-0.164px;">SUV(Full Size) - Inclusive GPS</span>
<span style="left:404.5px;top:666px;letter-spacing:0.129px;">Flexible Car...</span>
<span style="left:479.5px;top:666px;">Sun</span>
<span style="left:514.5px;top:666px;">23/09/2018</span>
<span style="left:584.5px;top:666px;">15:00</span>
<span style="left:624.5px;top:666px;">Wed</span>
<span style="left:659.5px;top:666px;">26/09/2018</span>
<span style="left:729.5px;top:666px;">10:00</span>
<span style="right:464px;top:666px;">3</span>
<span style="left:794.5px;top:666px;letter-spacing:0.450px;">On Air...</span>
<span style="left:844.5px;top:666px;letter-spacing:0.450px;">On Air...</span>
<span style="right:309px;top:666px;">218.59</span>
<span style="right:244px;top:666px;">218.59</span>
<span style="left:1014.5px;top:666px;">Alamo</span>
<span style="left:1089.5px;top:666px;">yes</span>
<span style="left:1114.5px;top:666px;">auto</span>
<div style="left:57px;top:680px;width:1085px;height:14px;background:#b5dfff;"></div>
<div style="left:57px;top:694px;width:1198px;height:1px;background:#d6d3ce;"></div>
<span style="left:59px;top:681px;letter-spacing:0.085px;">Chevrolet Tahoe Or ...</span>
<span style="right:1054px;top:681px;">7</span>
<span style="left:204.5px;top:681px;letter-spacing:-0.164px;">SUV(Full Size) - Inclusive GPS</span>
<span style="left:404.5px;top:681px;letter-spacing:0.129px;">Flexible Car...</span>
<span style="left:479.5px;top:681px;">Sun</span>
<span style="left:514.5px;top:681px;">23/09/2018</span>
<span style="left:584.5px;top:681px;">15:00</span>
<span style="left:624.5px;top:681px;">Wed</span>
<span style="left:659.5px;top:681px;">26/09/2018</span>
<span style="left:729.5px;top:681px;">10:00</span>
<span style="right:464px;top:681px;">3</span>
<span style="left:794.5px;top:681px;letter-spacing:0.450px;">On Air...</span>
<span style="left:844.5px;top:681px;letter-spacing:0.450px;">On Air...</span>
<span style="right:309px;top:681px;">218.59</span>
<span style="right:244px;top:681px;">218.59</span>
<span style="left:1014.5px;top:681px;">Alamo</span>
<span style="left:1089.5px;top:681px;">yes</span>
<span style="left:1114.5px;top:681px;">auto</span>
<div style="left:57px;top:695px;width:1085px;height:14px;background:#b5dfff;"></div>
<div style="left:57px;top:709px;width:1198px;height:1px;background:#d6d3ce;"></div>
<span style="left:59px;top:696px;letter-spacing:0.085px;">Chevrolet Tahoe Or ...</span>
<span style="right:1054px;top:696px;">7</span>
<span style="left:204.5px;top:696px;letter-spacing:-0.088px;">SUV(Full Size) - Inclusive GPS - Plus E...</span>
<span style="left:404.5px;top:696px;letter-spacing:0.129px;">Flexible Car...</span>
<span style="left:479.5px;top:696px;">Sun</span>
<span style="left:514.5px;top:696px;">23/09/2018</span>
<span style="left:584.5px;top:696px;">15:00</span>
<span style="left:624.5px;top:696px;">Wed</span>
<span style="left:659.5px;top:696px;">26/09/2018</span>
<span style="left:729.5px;top:696px;">10:00</span>
<span style="right:464px;top:696px;">3</span>
<span style="left:794.5px;top:696px;letter-spacing:0.450px;">On Air...</span>
<span style="left:844.5px;top:696px;letter-spacing:0.450px;">On Air...</span>
<span style="right:309px;top:696px;">226.58</span>
<span style="right:244px;top:696px;">226.58</span>
<span style="left:1014.5px;top:696px;">Alamo</span>
<span style="left:1089.5px;top:696px;">yes</span>
<span style="left:1114.5px;top:696px;">auto</span>
<div style="left:57px;top:710px;width:1085px;height:14px;background:#b5dfff;"></div>
<div style="left:57px;top:724px;width:1198px;height:1px;background:#d6d3ce;"></div>
<span style="left:59px;top:711px;letter-spacing:0.085px;">Chevrolet Tahoe Or ...</span>
<span style="right:1054px;top:711px;">7</span>
<span style="left:204.5px;top:711px;letter-spacing:-0.088px;">SUV(Full Size) - Inclusive GPS - Plus E...</span>
<span style="left:404.5px;top:711px;letter-spacing:0.129px;">Flexible Car...</span>
<span style="left:479.5px;top:711px;">Sun</span>
<span style="left:514.5px;top:711px;">23/09/2018</span>
<span style="left:584.5px;top:711px;">15:00</span>
<span style="left:624.5px;top:711px;">Wed</span>
<span style="left:659.5px;top:711px;">26/09/2018</span>
<span style="left:729.5px;top:711px;">10:00</span>
<span style="right:464px;top:711px;">3</span>
<span style="left:794.5px;top:711px;letter-spacing:0.450px;">On Air...</span>
<span style="left:844.5px;top:711px;letter-spacing:0.450px;">On Air...</span>
<span style="right:309px;top:711px;">226.58</span>
<span style="right:244px;top:711px;">226.58</span>
<span style="left:1014.5px;top:711px;">Alamo</span>
<span style="left:1089.5px;top:711px;">yes</span>
<span style="left:1114.5px;top:711px;">auto</span>
<div style="left:177px;top:365px;width:1px;height:360px;background:#d6d3ce;"></div>
<div style="left:202px;top:365px;width:1px;height:360px;background:#d6d3ce;"></div>
<div style="left:402px;top:365px;width:1px;height:360px;background:#d6d3ce;"></div>
<div style="left:477px;top:365px;width:1px;height:360px;background:#d6d3ce;"></div>
<div style="left:512px;top:365px;width:1px;height:360px;background:#d6d3ce;"></div>
<div style="left:582px;top:365px;width:1px;height:360px;background:#d6d3ce;"></div>
<div style="left:622px;top:365px;width:1px;height:360px;background:#d6d3ce;"></div>
<div style="left:657px;top:365px;width:1px;height:360px;background:#d6d3ce;"></div>
<div style="left:727px;top:365px;width:1px;height:360px;background:#d6d3ce;"></div>
<div style="left:767px;top:365px;width:1px;height:360px;background:#d6d3ce;"></div>
<div style="left:792px;top:365px;width:1px;height:360px;background:#d6d3ce;"></div>
<div style="left:842px;top:365px;width:1px;height:360px;background:#d6d3ce;"></div>
<div style="left:892px;top:365px;width:1px;height:360px;background:#d6d3ce;"></div>
<div style="left:947px;top:365px;width:1px;height:360px;background:#d6d3ce;"></div>
<div style="left:1012px;top:365px;width:1px;height:360px;background:#d6d3ce;"></div>
<div style="left:1087px;top:365px;width:1px;height:360px;background:#d6d3ce;"></div>
<div style="left:1112px;top:365px;width:1px;height:360px;background:#d6d3ce;"></div>
<div style="left:1142px;top:365px;width:1px;height:360px;background:#d6d3ce;"></div>
<span style="left:60px;top:757px;letter-spacing:-0.071px;">First portion: 10.1 sec, total search time: 10.3 sec</span>
<div style="left:53px;top:779px;width:1202px;height:1px;background:#848284;"></div>
<span style="left:56px;top:782px;letter-spacing:-0.450px;color:#000">Summary</span>
<span style="left:108px;top:782px;color:#000">Search</span>
<div style="left:147px;top:780px;width:145px;height:17px;background:#ceffc6;"></div>
<span style="left:150px;top:782px;color:#000">Acc 5A MCO; 12/09/2018 4n</span>
<div style="left:292px;top:780px;width:49px;height:17px;background:#0c840c;"></div>
<span style="left:295px;top:782px;color:#fff">Car MCO</span>
<div style="left:341px;top:780px;width:146px;height:17px;background:#c6c3ff;"></div>
<span style="left:346px;top:782px;color:#000">Acc 5A MCO; 12/09/2018 4n</span>
<div style="left:487px;top:780px;width:145px;height:17px;background:#ceffc6;"></div>
<span style="left:491px;top:782px;letter-spacing:-0.038px;color:#000">Acc 5A MCO; 23/09/2018 3n</span>
<div style="left:632px;top:780px;width:51px;height:17px;background:#ceffc6;"></div>
<span style="left:635px;top:782px;color:#000">Car MCO</span>
<div style="left:683px;top:780px;width:108px;height:17px;background:#c6c3ff;"></div>
<span style="left:686px;top:782px;color:#000">Flt 5A LON MCO LON</span>
<span style="left:794px;top:782px;letter-spacing:-0.280px;color:#000">Financial Summary</span>
<div style="left:105px;top:780px;width:1px;height:16px;background:#848284;"></div>
<div style="left:146px;top:780px;width:1px;height:16px;background:#848284;"></div>
<div style="left:486px;top:780px;width:1px;height:16px;background:#848284;"></div>
<div style="left:631px;top:780px;width:1px;height:16px;background:#848284;"></div>
<div style="left:790px;top:780px;width:1px;height:16px;background:#848284;"></div>
<div style="left:886px;top:780px;width:1px;height:16px;background:#848284;"></div>
<div style="left:682px;top:780px;width:1px;height:16px;background:#a0a29c;"></div>
<div style="left:292px;top:779px;width:49px;height:18px;background:#0c840c;border-radius:0 0 2px 2px"></div>
<span style="left:295px;top:782px;color:#fff">Car MCO</span>
<span style="left:513px;top:806px;letter-spacing:0.045px;">User: 468 - Jack Lane</span>
<span style="left:629px;top:806px;letter-spacing:-0.112px;">Retailer: &#x27;Ocean-Florida&#x27;</span>
<span style="left:754px;top:806px;">Client: none</span>
<span class="b" style="left:1251px;top:806px;">1</span>
</body></html>
